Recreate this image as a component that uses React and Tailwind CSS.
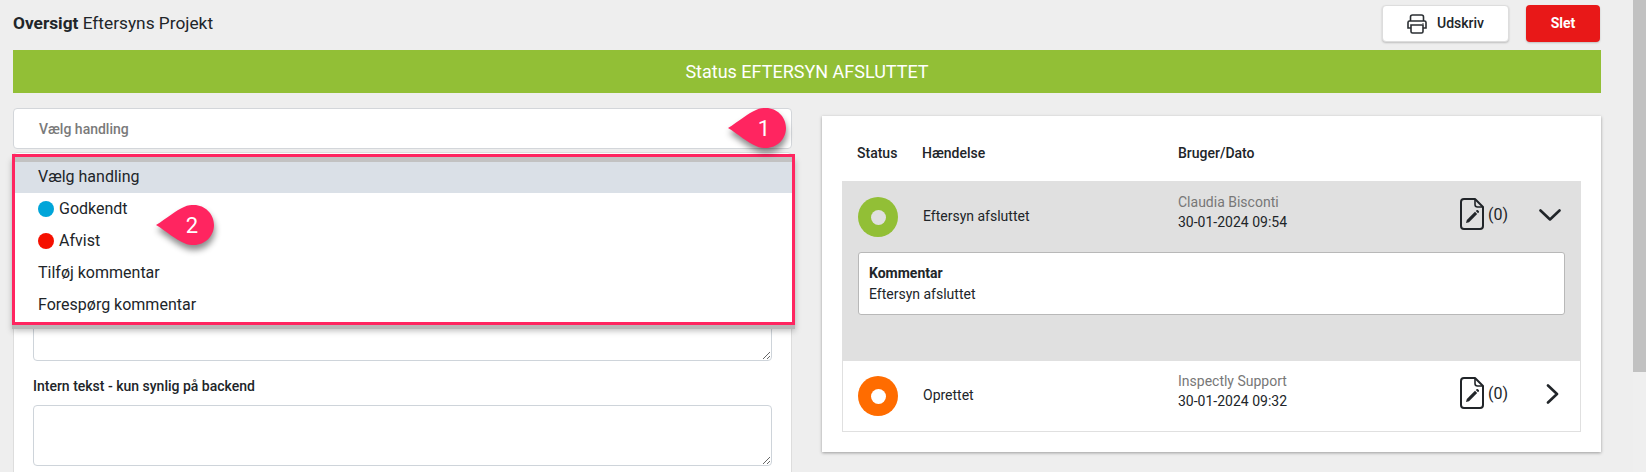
import React from "react";

function Bubble({ n, className }) {
  return (
    <div className={"absolute z-20 w-[60px] h-[42px] " + className}>
      <svg width="60" height="42" viewBox="0 0 60 42" className="absolute left-0 top-0 overflow-visible drop-shadow-[1px_5px_3px_rgba(0,0,0,0.45)]">
        <path d="M0 21 C10 15 20 6 28 3 C32 1 35 1 38 1 C49 1 58 10 58 21 C58 32 49 41 38 41 C35 41 32 41 28 39 C20 36 10 27 0 21 Z" fill="#ff2560" />
      </svg>
      <span className="absolute left-[16px] w-[40px] top-0 h-[42px] flex items-center justify-center text-white text-[22px]">{n}</span>
    </div>
  );
}

function FileIcon() {
  return (
    <svg width="24" height="32" viewBox="0 0 24 32" fill="none" className="text-[#212529]">
      <path d="M15 1 H4 C2.3 1 1 2.3 1 4 V28 C1 29.7 2.3 31 4 31 H20 C21.7 31 23 29.7 23 28 V9 Z" stroke="currentColor" strokeWidth="2" strokeLinejoin="round" />
      <path d="M15 1 V6.5 C15 8 16 9 17.5 9 H23" stroke="currentColor" strokeWidth="1.6" strokeLinejoin="round" />
      <path d="M6 25 L6.8 22 L15 13.8 L17.2 16 L9 24.2 Z" fill="currentColor" />
      <path d="M15.8 13 L16.6 12.2 C17 11.8 17.5 11.8 17.9 12.2 L18.8 13.1 C19.2 13.5 19.2 14 18.8 14.4 L18 15.2 Z" fill="currentColor" />
    </svg>
  );
}

function PrinterIcon() {
  return (
    <svg width="20" height="20" viewBox="0 0 20 20" fill="none" stroke="#2b2f33" strokeWidth="1.6">
      <path d="M3.5 7 V3 C3.5 1.8 4.3 1 5.5 1 H14.5 C15.7 1 16.5 1.8 16.5 3 V7" />
      <path d="M1 8.5 C1 7.6 1.6 7 2.5 7 H17.5 C18.4 7 19 7.6 19 8.5 V14 H1 Z" />
      <path d="M4 11 H16 V17.5 C16 18.4 15.4 19 14.5 19 H5.5 C4.6 19 4 18.4 4 17.5 Z" fill="#fff" />
      <circle cx="16" cy="9.5" r="0.6" fill="#2b2f33" stroke="none" />
    </svg>
  );
}

function Chevron({ down }) {
  return down ? (
    <svg width="22" height="12" viewBox="0 0 22 12" fill="none" stroke="#212529" strokeWidth="2.6" strokeLinecap="round" strokeLinejoin="round">
      <path d="M1.5 1.5 L11 10.5 L20.5 1.5" />
    </svg>
  ) : (
    <svg width="13" height="20" viewBox="0 0 13 20" fill="none" stroke="#212529" strokeWidth="2.6" strokeLinecap="round" strokeLinejoin="round">
      <path d="M2 1.5 L11 10 L2 18.5" />
    </svg>
  );
}

function Row({ ring, title, user, date, down, ringInner, inset }) {
  return (
    <div className={"flex items-center h-[70px] " + (inset ? "pl-[15px]" : "pl-[16px]")}>
      <div className={"w-10 h-10 rounded-full flex items-center justify-center " + (inset ? "" : "mt-[2px]")} style={{ backgroundColor: ring }}>
        <div className="w-[15px] h-[15px] rounded-full" style={{ backgroundColor: ringInner }} />
      </div>
      <div className={"w-[255px] ml-[25px] text-[14px] text-[#212529] " + (inset ? "pb-[2px]" : "")}>{title}</div>
      <div className={"w-[282px] text-[14px] leading-[20px] " + (inset ? "pb-[10px]" : "pb-[8px]")}>
        <div className="text-[#777777]">{user}</div>
        <div className="text-[#212529]">{date}</div>
      </div>
      <div className={inset ? "pb-[6px]" : "pb-[4px]"}><FileIcon /></div>
      <span className={"ml-[4px] w-[51px] text-[16px] text-[#212529] " + (inset ? "pb-[5px]" : "pb-[2px]")}>(0)</span>
      <div className={"w-[22px] flex justify-center " + (inset ? "pb-[4px] pl-[5px]" : "pb-[2px]")}><Chevron down={down} /></div>
    </div>
  );
}

export default function App() {
  return (
    <div className="relative flex h-[472px] overflow-hidden bg-[#eeeeee] font-['Roboto',sans-serif]">
      <div className="flex-1 pl-[13px] pr-[32px]">
        <div className="flex items-center justify-between h-[50px] pb-[3px]">
          <div className="text-[17.3px] text-[#212529]"><b className="font-bold">Oversigt</b> Eftersyns Projekt</div>
          <div className="flex gap-[17px] pr-[1px]">
            <button className="flex items-center justify-center gap-[10px] w-[127px] h-[37px] bg-white rounded-[4px] border border-[#dddddd] shadow-[0_1px_2px_rgba(0,0,0,0.2)] text-[14px] font-medium text-[#212529]"><PrinterIcon />Udskriv</button>
            <button className="w-[74px] h-[37px] rounded-[4px] bg-[#e81818] shadow-[0_1px_2px_rgba(0,0,0,0.2)] text-[14px] font-bold text-white">Slet</button>
          </div>
        </div>
        <div className="h-[43px] bg-[#92bf36] flex items-center justify-center text-white text-[18px]">Status EFTERSYN AFSLUTTET</div>

        <div className="grid grid-cols-[779px_779px] gap-[30px]">
          <div className="relative pt-[15px]">
            <div className="h-[41px] pt-[1px] bg-white border border-[#d3d6da] rounded-[4px] flex items-center pl-[25px] text-[14px] font-medium text-[#7a7a7a]">Vælg handling</div>
            <div className="mt-[3px] bg-white border border-[#dddddd] rounded-t-[4px] pt-[148px] pl-[19px] pb-[20px]">
              <textarea className="block w-[739px] h-[60px] bg-white border border-[#ced4da] rounded-[4px]" />
              <div className="mt-[16px] mb-[10px] text-[14px] font-medium leading-[18px] text-[#212529]">Intern tekst - kun synlig på backend</div>
              <textarea className="block w-[739px] h-[61px] bg-white border border-[#ced4da] rounded-[4px]" />
            </div>

            <div className="absolute left-[-1px] top-[61px] w-[783px] h-[171px] bg-white border-[3px] border-[#ff2560] shadow-[0_4px_0_#b9b9b9,0_6px_6px_rgba(0,0,0,0.25)] text-[16px] text-[#212529] z-10">
              <div className="h-[5px] bg-[#c2c2c2]" />
              <div className="h-[31px] pb-[1px] bg-[#dae0e7] flex items-center pl-[23px]">Vælg handling</div>
              <div className="h-[32px] flex items-center pl-[23px]"><span className="w-[16px] h-[16px] rounded-full bg-[#00a5d9] mr-[5px]" />Godkendt</div>
              <div className="h-[32px] flex items-center pl-[23px]"><span className="w-[16px] h-[16px] rounded-full bg-[#f51000] mr-[5px]" />Afvist</div>
              <div className="h-[32px] flex items-center pl-[23px]">Tilføj kommentar</div>
              <div className="h-[32px] flex items-center pl-[23px]">Forespørg kommentar</div>
            </div>
          </div>

          <div className="pt-[23px]">
            <div className="h-[336px] bg-white px-[20px] pt-[27px] shadow-[0_1px_3px_rgba(0,0,0,0.35)]">
              <div className="flex h-[38px] pb-[5px] items-start text-[14px] font-medium leading-[20px] text-[#212529]">
                <div className="w-[65px] pl-[15px] box-content">Status</div>
                <div className="w-[256px]">Hændelse</div>
                <div>Bruger/Dato</div>
              </div>
              <div className="bg-[#e0e0e0] h-[180px]">
                <Row ring="#92bf36" ringInner="#e0e0e0" title="Eftersyn afsluttet" user="Claudia Bisconti" date="30-01-2024 09:54" down />
                <div className="mx-[16px] mt-[1px] h-[63px] bg-white border border-[#b8b8b8] rounded-[3px] px-[10px] pt-[10px] text-[14px] leading-[21px] text-[#212529]">
                  <div className="font-bold">Kommentar</div>
                  <div>Eftersyn afsluttet</div>
                </div>
              </div>
              <div className="border border-t-0 border-[#e0e0e0]">
                <Row inset ring="#ff6c00" ringInner="#ffffff" title="Oprettet" user="Inspectly Support" date="30-01-2024 09:32" />
              </div>
            </div>
          </div>
        </div>
      </div>
      <div className="w-[13px] shrink-0 bg-[#efefef]"><div className="h-[372px] bg-[#c1c1c1]" /></div>

      <Bubble n="1" className="left-[728px] top-[107px]" />
      <Bubble n="2" className="left-[156px] top-[204px]" />
    </div>
  );
}
